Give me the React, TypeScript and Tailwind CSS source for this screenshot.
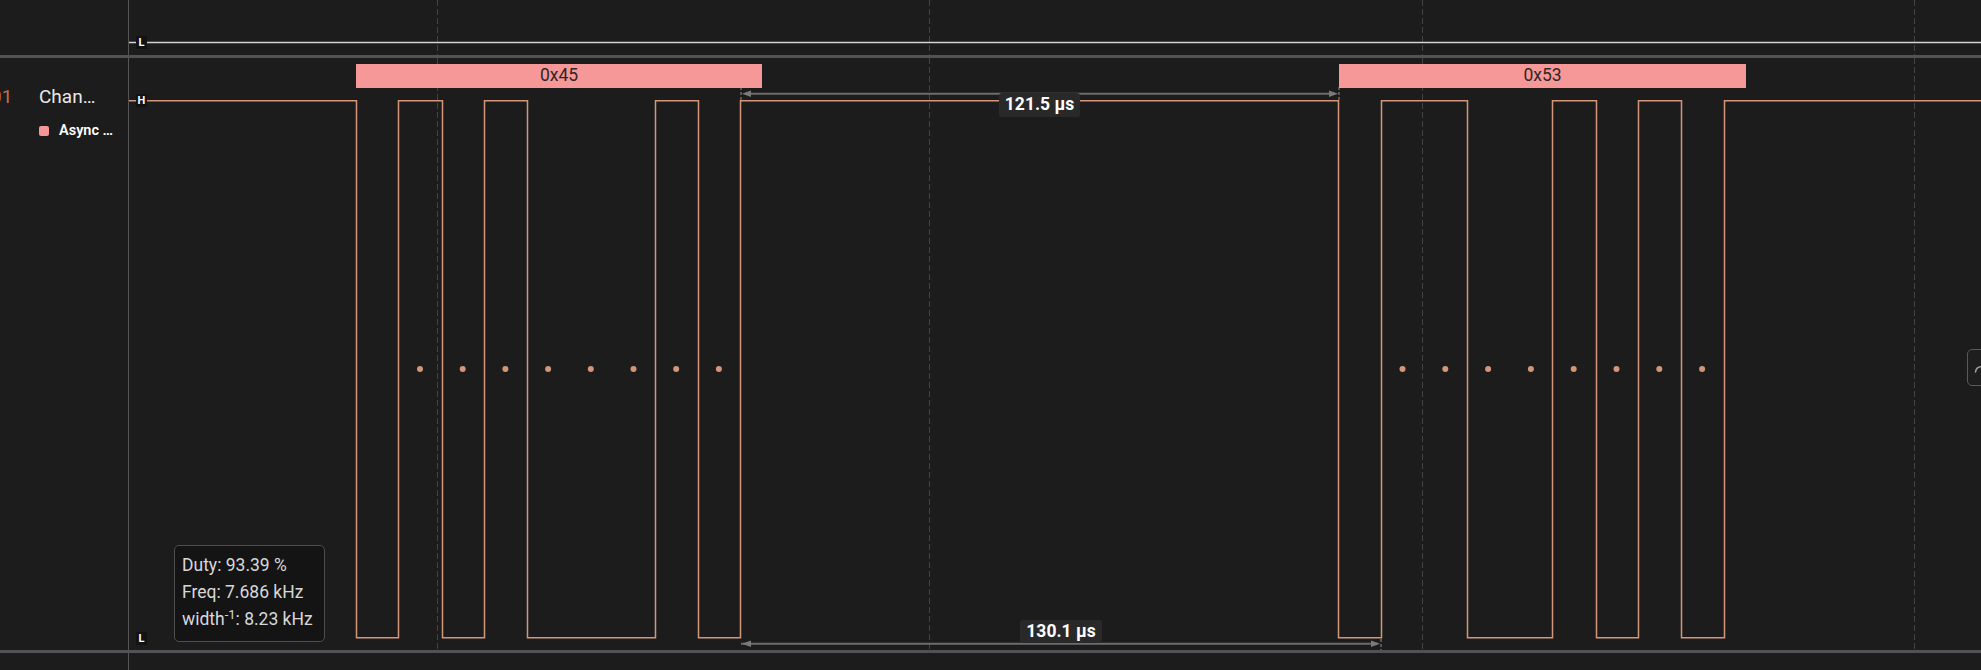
import React from "react";

const GRID_X = [437.5, 929.5, 1422.5, 1914.5];
const SIG = "#d4967a";

const HI = 100.75;
const LO = 637.75;
const EDGES = [356.5, 398.5, 442.5, 484.5, 527.5, 655.5, 698.5, 740.5, 1338.5, 1381.5, 1467.5, 1552.5, 1596.5, 1638.5, 1681.5, 1724.5];

function signalPath() {
  let d = `M129 ${HI}`;
  let high = true;
  for (const x of EDGES) {
    d += ` H${x} V${high ? LO : HI}`;
    high = !high;
  }
  d += ` H1981`;
  return d;
}

const DOTS = [
  ...[0, 1, 2, 3, 4, 5, 6, 7].map((i) => 420 + i * 42.7),
  ...[0, 1, 2, 3, 4, 5, 6, 7].map((i) => 1402.5 + i * 42.8),
];

function LevelTag({ children, className }: { children: React.ReactNode; className: string }) {
  return (
    <div
      className={`absolute flex h-[13px] w-[11px] items-center justify-center bg-[#131313] text-[11px] font-bold leading-none text-white ${className}`}
    >
      {children}
    </div>
  );
}

export default function App() {
  return (
    <div className="relative flex h-[670px] w-[1981px] flex-col overflow-hidden bg-[#1c1c1c] font-[Roboto]">
      {/* top row */}
      <div className="flex h-[55px]">
        <div className="w-[129px] shrink-0 border-r border-[#555557]" />
        <div className="relative flex-1">
          <svg width={1852} height={55} className="block">
            <g transform="translate(-129 0)">
              {GRID_X.map((x) => (
                <line key={x} x1={x} x2={x} y1={0} y2={55} stroke="#444446" strokeWidth={1} strokeDasharray="6 3" />
              ))}
              <line x1={129} x2={1981} y1={42.5} y2={42.5} stroke="#d2d2d2" strokeWidth={1.5} />
            </g>
          </svg>
          <LevelTag className="left-[7px] top-[36px]">L</LevelTag>
        </div>
      </div>

      <div className="h-[3px] bg-[#525256]" />

      {/* channel row */}
      <div className="flex h-[592px]">
        <div className="w-[129px] shrink-0 overflow-hidden border-r border-[#555557]">
          <div className="mt-[26px] flex h-[24px] items-center whitespace-nowrap">
            <span className="ml-[-9px] w-[21px] text-[19px] leading-none text-[#b8734f]">01</span>
            <span className="ml-[27px] text-[19px] leading-none text-[#e8e8e8]">Chan…</span>
          </div>
          <div className="mt-[13px] flex h-[20px] items-center whitespace-nowrap pl-[39px]">
            <span className="h-[10px] w-[10px] rounded-[2px] bg-[#f69797]" />
            <span className="ml-[10px] text-[14.5px] font-semibold leading-none text-white">Async …</span>
          </div>
        </div>

        <div className="relative flex-1">
          <svg width={1852} height={592} className="block">
            <g transform="translate(-129 -58)">
              {GRID_X.map((x) => (
                <line key={x} x1={x} x2={x} y1={58} y2={650} stroke="#444446" strokeWidth={1} strokeDasharray="6 3" />
              ))}
              <path d={signalPath()} fill="none" stroke={SIG} strokeWidth={1.5} />
              {DOTS.map((x) => (
                <circle key={x} cx={x} cy={369} r={3} fill={SIG} />
              ))}

              {/* top measurement */}
              <line x1={741} x2={741} y1={87} y2={100} stroke="#6a6a6a" strokeWidth={1.5} strokeDasharray="3 2" />
              <line x1={1339} x2={1339} y1={87} y2={100} stroke="#6a6a6a" strokeWidth={1.5} strokeDasharray="3 2" />
              <line x1={745} x2={1335} y1={93.75} y2={93.75} stroke="#6c6c6c" strokeWidth={2} />
              <polygon points="742,93.75 751,90.5 751,97" fill="#7a7a7a" />
              <polygon points="1338,93.75 1329,90.5 1329,97" fill="#7a7a7a" />

              {/* bottom measurement */}
              <line x1={1381} x2={1381} y1={639} y2={650} stroke="#6a6a6a" strokeWidth={1.5} strokeDasharray="3 2" />
              <line x1={741} x2={1377} y1={643.75} y2={643.75} stroke="#6c6c6c" strokeWidth={2} />
              <polygon points="742,643.75 751,640.5 751,647" fill="#7a7a7a" />
              <polygon points="1380,643.75 1371,640.5 1371,647" fill="#7a7a7a" />
            </g>
          </svg>

          {/* decoded bytes */}
          <div className="absolute left-[227px] top-[6px] flex h-[24px] w-[406px] items-center justify-center bg-[#f69898] text-[17.5px] leading-none text-[#2e2626]">
            0x45
          </div>
          <div className="absolute left-[1210px] top-[6px] flex h-[24px] w-[407px] items-center justify-center bg-[#f69898] text-[17.5px] leading-none text-[#2e2626]">
            0x53
          </div>

          {/* measurement labels */}
          <div className="absolute left-[870px] top-[35px] flex h-[24px] w-[81px] items-center justify-center rounded-[3px] bg-[#292929] text-[17.5px] font-bold leading-none text-white">
            121.5 µs
          </div>
          <div className="absolute left-[891px] top-[562px] flex h-[23px] w-[82px] items-center justify-center rounded-[3px] bg-[#292929] text-[17.5px] font-bold leading-none text-white">
            130.1 µs
          </div>

          <LevelTag className="left-[7px] top-[36px]">H</LevelTag>
          <LevelTag className="left-[7px] top-[574px]">L</LevelTag>

          {/* tooltip */}
          <div className="absolute left-[45px] top-[487px] h-[97px] w-[151px] rounded-[5px] border border-[#4e4e4e] bg-[#141414] pl-[7px] pt-[6px] text-[17.5px] leading-[27px] text-[#d8d8d8]">
            <div>Duty: 93.39 %</div>
            <div>Freq: 7.686 kHz</div>
            <div>
              width<sup className="text-[13px]">-1</sup>: 8.23 kHz
            </div>
          </div>

          {/* right-edge scroll button */}
          <div className="absolute left-[1838px] top-[291px] h-[37px] w-[30px] rounded-[5px] border border-[#5a5a5a] bg-[#1e1e1e]">
            <svg width={16} height={12} className="absolute left-[6px] top-[12px]">
              <path d="M1.5 10 C2.5 3, 12 3, 13.5 10" fill="none" stroke="#a0a0a0" strokeWidth={1.5} strokeLinecap="round" />
            </svg>
          </div>
        </div>
      </div>

      <div className="h-[3px] bg-[#525256]" />

      <div className="flex flex-1">
        <div className="w-[129px] shrink-0 border-r border-[#555557]" />
      </div>
    </div>
  );
}
